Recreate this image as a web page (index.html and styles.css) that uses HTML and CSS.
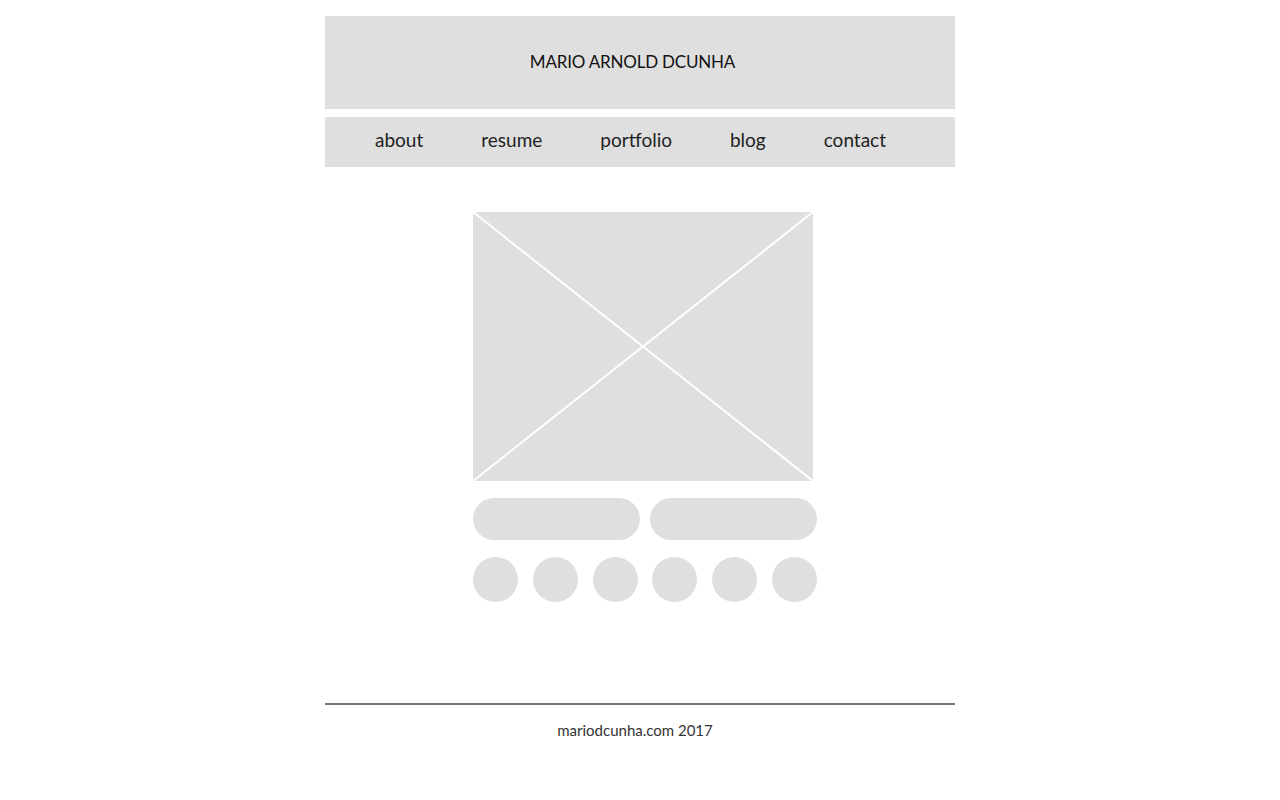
FILE: index.html
```html
<!DOCTYPE html>
<html lang="en">
<head>
  <meta charset="UTF-8">
  <meta name="viewport" content="width=device-width, initial-scale=1.0">
  <title>Mario Arnold Dcunha</title>
  <link rel="stylesheet" href="styles.css">
</head>
<body>
  <div class="page">
    <header class="masthead">
      <h1>MARIO ARNOLD DCUNHA</h1>
    </header>

    <nav class="menu">
      <a href="#">about</a>
      <a href="#">resume</a>
      <a href="#">portfolio</a>
      <a href="#">blog</a>
      <a href="#">contact</a>
    </nav>

    <main class="content">
      <div class="placeholder">
        <svg viewBox="0 0 340 269" preserveAspectRatio="none">
          <line x1="0" y1="0" x2="340" y2="269" />
          <line x1="340" y1="0" x2="0" y2="269" />
        </svg>
      </div>

      <div class="pills">
        <span class="pill"></span>
        <span class="pill"></span>
      </div>

      <div class="dots">
        <span class="dot"></span>
        <span class="dot"></span>
        <span class="dot"></span>
        <span class="dot"></span>
        <span class="dot"></span>
        <span class="dot"></span>
      </div>
    </main>

    <footer class="foot">
      <p>mariodcunha.com 2017</p>
    </footer>
  </div>
</body>
</html>
```

FILE: styles.css
```css
* { box-sizing: border-box; margin: 0; padding: 0; }
body {
  font-family: 'Lato', 'Open Sans', sans-serif;
  background: #ffffff;
  color: #222;
}

.page {
  width: 630px;
  margin: 16px auto 0;
}

.masthead {
  background: #dfdfdf;
  height: 93px;
  display: flex;
  align-items: center;
  justify-content: center;
  padding-right: 15px;
}
.masthead h1 {
  font-size: 17px;
  font-weight: 400;
  letter-spacing: -0.2px;
  color: #111;
  padding-bottom: 3px;
}

.menu {
  background: #dfdfdf;
  height: 50px;
  margin-top: 8px;
  display: flex;
  align-items: center;
  justify-content: center;
  gap: 58px;
  padding: 0 19px 5px 0;
}
.menu a {
  font-size: 19px;
  color: #222;
  text-decoration: none;
}

.content {
  margin: 45px 0 0 148px;
  width: 344px;
  height: 491px;
}
.placeholder {
  width: 340px;
  height: 269px;
  background: #dfdfdf;
}
.placeholder svg {
  display: block;
  width: 100%;
  height: 100%;
}
.placeholder line {
  stroke: #fff;
  stroke-width: 2;
}

.pills {
  display: flex;
  gap: 10px;
  margin-top: 17px;
}
.pill {
  width: 167px;
  height: 42px;
  border-radius: 21px;
  background: #dfdfdf;
}

.dots {
  display: flex;
  justify-content: space-between;
  margin-top: 17px;
}
.dot {
  width: 45px;
  height: 45px;
  border-radius: 50%;
  background: #dfdfdf;
}

.foot {
  border-top: 2px solid #777;
  padding: 16px 10px 0 0;
  text-align: center;
}
.foot p {
  font-size: 15px;
  color: #333;
}
```
